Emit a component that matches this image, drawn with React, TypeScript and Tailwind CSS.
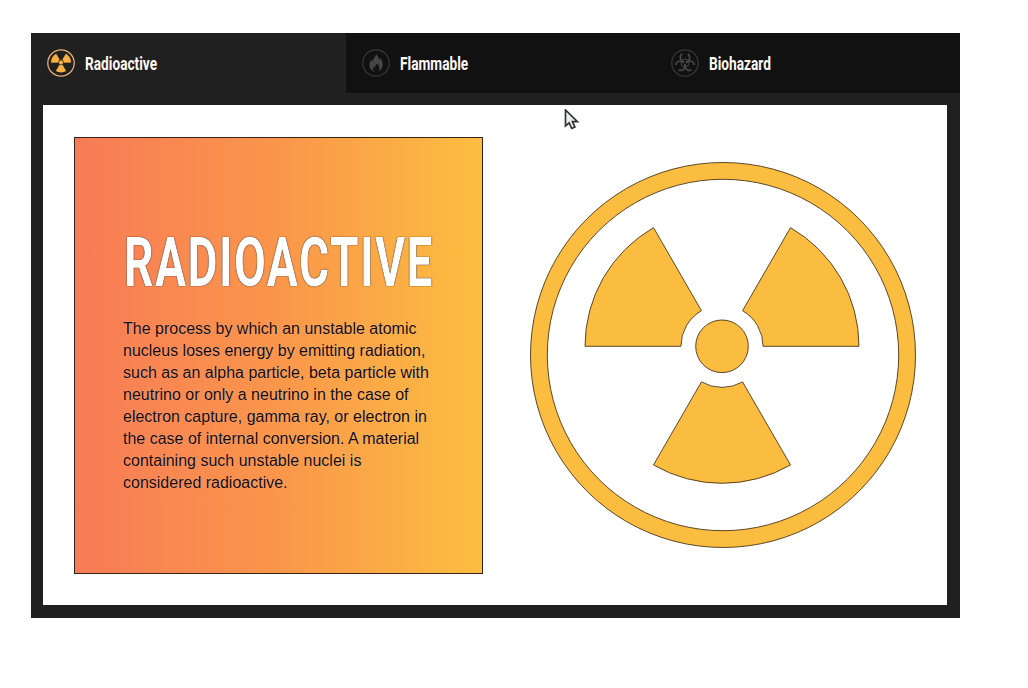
import React from "react";

function Trefoil({ cx, cy, r }: { cx: number; cy: number; r: number }) {
  const inner = r * 0.3;
  const p = (radius: number, deg: number) => {
    const a = (deg * Math.PI) / 180;
    return `${(cx + radius * Math.cos(a)).toFixed(2)} ${(cy + radius * Math.sin(a)).toFixed(2)}`;
  };
  return (
    <g>
      {[60, 180, 300].map((start) => (
        <path
          key={start}
          d={`M${p(inner, start)} L${p(r, start)} A${r} ${r} 0 0 1 ${p(r, start + 60)} L${p(inner, start + 60)} A${inner} ${inner} 0 0 0 ${p(inner, start)}Z`}
        />
      ))}
      <circle cx={cx} cy={cy} r={r * 0.192} />
    </g>
  );
}

function RadioactiveIcon() {
  return (
    <svg viewBox="0 0 28 28" className="h-7 w-7 shrink-0" fill="#fbb040">
      <circle cx="14" cy="14" r="13.2" fill="none" stroke="#e8ae74" strokeWidth="1.3" />
      <g stroke="#fbb040" strokeWidth="0.4">
        <Trefoil cx={14} cy={13.4} r={9.8} />
      </g>
    </svg>
  );
}

function FlameIcon() {
  return (
    <svg viewBox="0 0 28 28" className="h-7 w-7 shrink-0">
      <circle cx="14" cy="14" r="13.2" fill="none" stroke="#393939" strokeWidth="1.2" />
      <path
        fill="#464646"
        d="M14 4.500c.7 2.200 2.800 3.600 3.500 6.200.5-.5.8-1.200.8-2 1.500 2.100 2.400 4.300 2.400 6.900 0 3.900-2.200 6.400-5.100 6.900 1.500-1 2.200-2.200 1.900-3.700-.3-1.500-1.600-2.300-1.900-4-1.900 1-3.100 2.700-2.900 4.500-.7-.3-1.100-.9-1.100-1.700-1.300 2-.7 3.900 1.200 4.900-3.200-.5-5.300-2.900-5.300-6.400 0-2.300.9-4.100 2.100-5.500 0 1 .2 1.800.7 2.400.5-3.300 3.600-4.900 3.700-8.500z"
      />
    </svg>
  );
}

function BiohazardIcon() {
  return (
    <svg viewBox="0 0 28 28" className="h-7 w-7 shrink-0" fill="none">
      <circle cx="14" cy="14" r="13.2" stroke="#393939" strokeWidth="1.2" />
      <g stroke="#484848">
        <circle cx="14" cy="14" r="4" strokeWidth="0.9" />
        {[0, 120, 240].map((angle) => (
          <path
            key={angle}
            transform={`rotate(${angle} 14 14)`}
            d="M16.800 4.800A4.700 4.700 0 1 1 11.200 4.800"
            strokeWidth="1.7"
          />
        ))}
      </g>
      <circle cx="14" cy="14" r="1.200" fill="#101110" />
    </svg>
  );
}

function TabLabel({ children }: { children: React.ReactNode }) {
  return (
    <span className="mt-px ml-[0.5px] origin-left scale-x-[0.76] text-[18px] leading-6 font-bold text-[#fff8f5]">
      {children}
    </span>
  );
}

export default function App() {
  return (
    <div className="h-[688px] overflow-hidden bg-white pt-[33px] pl-[31px] font-['Roboto',sans-serif]">
      <main className="flex h-[585px] w-[929px] flex-col bg-[#202020]">
        <nav className="flex h-[60px]">
          <button className="flex w-[315px] items-center gap-[9px] bg-[#202020] pl-4">
            <RadioactiveIcon />
            <TabLabel>Radioactive</TabLabel>
          </button>
          <button className="flex w-[309px] items-center gap-[9px] bg-[#101110] pl-4">
            <FlameIcon />
            <TabLabel>Flammable</TabLabel>
          </button>
          <button className="flex flex-1 items-center gap-[9px] bg-[#101110] pl-4">
            <BiohazardIcon />
            <TabLabel>Biohazard</TabLabel>
          </button>
        </nav>
        <div className="mx-3 mt-3 h-[500px] w-[905px] bg-[#202020] pr-px">
          <section className="flex h-full bg-white pt-8 pl-[31px]">
            <article className="h-[437px] w-[409px] border border-[#33231c] bg-linear-to-r from-[#f87b56] via-[#fa964a] to-[#fbbe40] pt-[85px] pl-12">
              <h1 className="ml-px origin-left scale-x-[0.68] text-[68px] leading-[80px] font-bold tracking-[2.1px] whitespace-nowrap text-white [text-shadow:0_0_1px_#200400,0_0_1px_#200400]">
                RADIOACTIVE
              </h1>
              <p className="mt-[14.5px] w-[312px] font-['Liberation_Sans',sans-serif] text-[16px] leading-[22px] text-[#160805] [text-shadow:0_0_1px_#ffffff80]">
                The process by which an unstable atomic nucleus loses energy by emitting radiation, such as an alpha particle, beta particle with neutrino or only a neutrino in the case of electron capture, gamma ray, or electron in the case of internal conversion. A material containing such unstable nuclei is considered radioactive.
              </p>
            </article>
            <svg viewBox="0 0 388 388" className="mt-6 ml-[46px] h-[388px] w-[388px]" fill="#fbbd40" stroke="#4b3518" strokeWidth="0.9">
              <path fillRule="evenodd" d="M194 1.500A192.500 192.500 0 1 1 193.990 1.500ZM194 18.300A175.700 175.700 0 1 0 194.010 18.300Z" />
              <Trefoil cx={193} cy={185.300} r={137} />
            </svg>
          </section>
        </div>
      </main>
      <svg viewBox="0 0 16 22" className="absolute top-[109px] left-[564px] h-[22px] w-4">
        <path d="M1.500 1v16l3.700-3.200 2.500 5.700 3.200-1.400-2.500-5.500h5z" fill="#eee" stroke="#303532" strokeWidth="1.700" />
      </svg>
    </div>
  );
}
